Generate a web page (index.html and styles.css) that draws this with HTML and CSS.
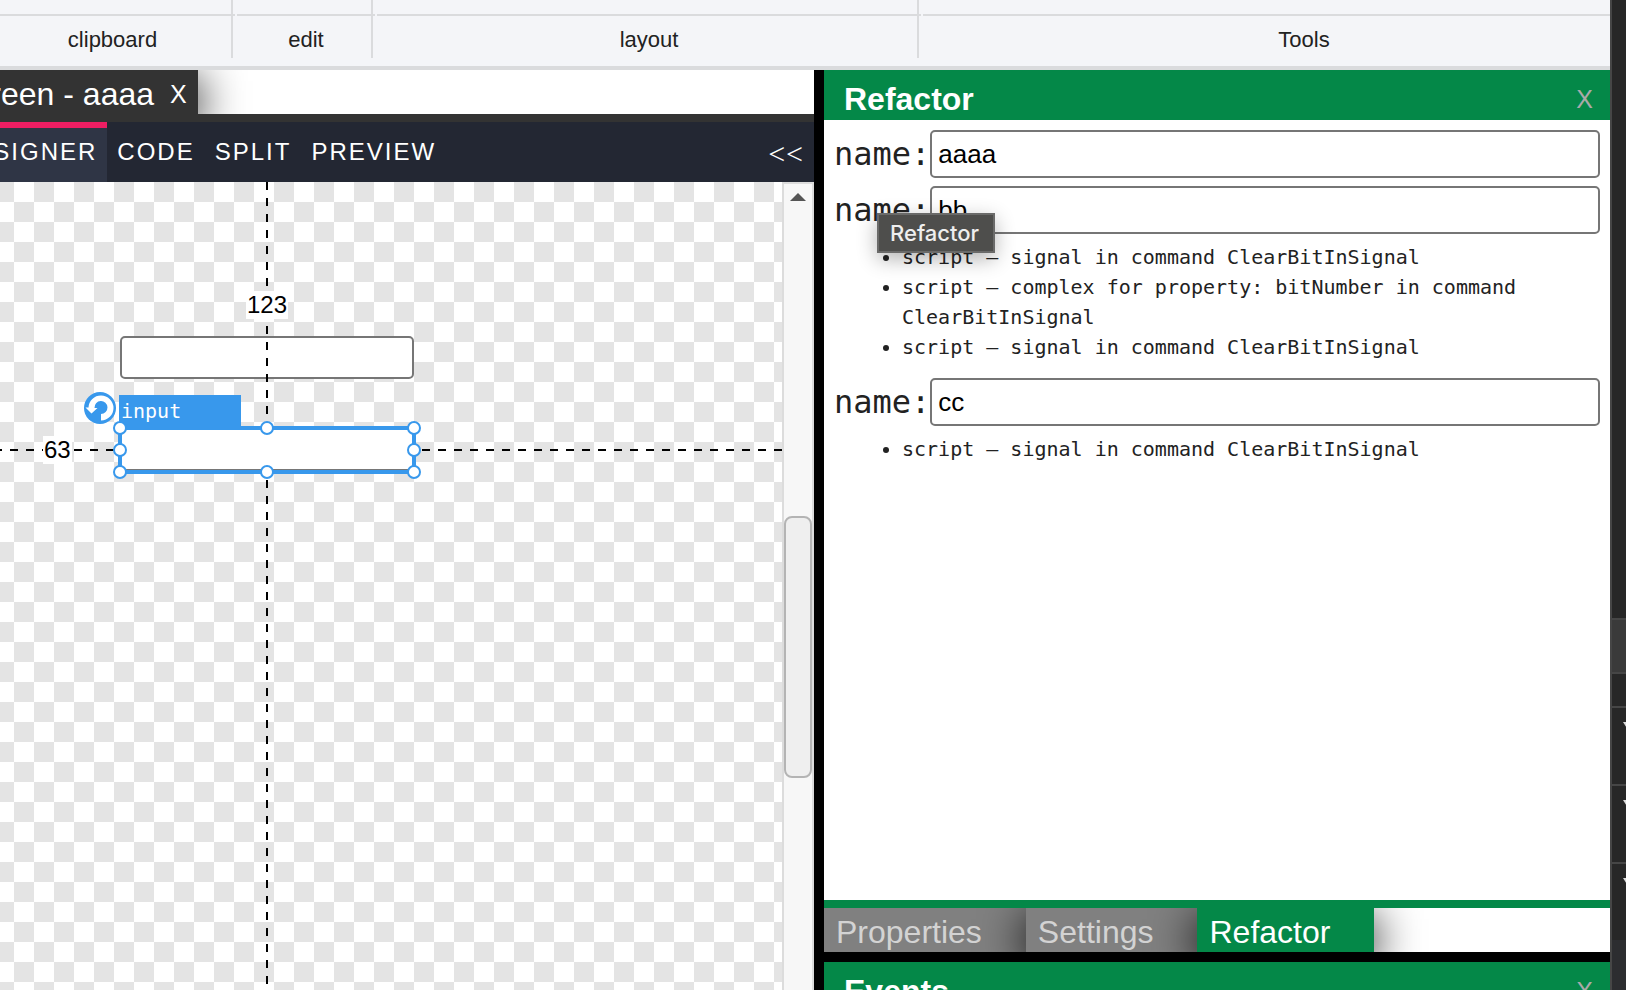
FILE: index.html
```html
<!DOCTYPE html>
<html lang="en">
<head>
<meta charset="utf-8">
<title>Screen designer</title>
<link rel="stylesheet" href="styles.css">
</head>
<body>
<div class="app">
  <header class="ribbon">
    <div class="ribbon-group ribbon-clipboard"><div class="ribbon-tools"></div><div class="ribbon-label">clipboard</div></div>
    <div class="ribbon-group ribbon-edit"><div class="ribbon-tools"></div><div class="ribbon-label">edit</div></div>
    <div class="ribbon-group ribbon-layout"><div class="ribbon-tools"></div><div class="ribbon-label">layout</div></div>
    <div class="ribbon-group ribbon-last"><div class="ribbon-tools"></div><div class="ribbon-label">Tools</div></div>
  </header>
  <div class="workspace">
    <main class="editor">
      <div class="doc-tabs">
        <div class="doc-tab"><span>Screen - aaaa</span><button class="close" aria-label="Close document">X</button></div>
      </div>
      <nav class="modes">
        <button class="mode mode-active">DESIGNER</button>
        <button class="mode">CODE</button>
        <button class="mode">SPLIT</button>
        <button class="mode">PREVIEW</button>
        <button class="collapse" aria-label="Collapse">&lt;&lt;</button>
      </nav>
      <div class="stage">
        <div class="canvas">
          <input class="field" type="text" aria-label="First field">
          <input class="field field-selected" type="text" aria-label="Second field">
          <div class="guide-v guide-top"></div>
          <div class="guide-v guide-bottom"></div>
          <div class="guide-h guide-left"></div>
          <div class="guide-h guide-right"></div>
          <span class="measure measure-y">123</span>
          <span class="measure measure-x">63</span>
          <span class="tag">input</span>
          <svg class="rotate" viewBox="0 0 32 32" width="32" height="32">
            <circle cx="16" cy="16" r="16" fill="#3898ec"/>
            <path d="M17 28.500V22A6.500 6.500 0 1 0 10.500 16H13.500L7.500 21.500 1.500 15.500H4.500A12.500 12.500 0 0 1 17 3.500 12.500 12.500 0 0 1 29.500 16 12.500 12.500 0 0 1 17 28.500Z" fill="#fff"/>
          </svg>
          <svg class="handles" viewBox="0 0 310 60" width="310" height="60">
            <rect x="8" y="8" width="294" height="44" fill="none" stroke="#3898ec" stroke-width="4"/>
            <path d="M10 49.500H300" stroke="#777" stroke-width="1" stroke-dasharray="8 8"/>
            <g fill="#fff" stroke="#3898ec" stroke-width="2">
              <circle cx="8" cy="8" r="6"/><circle cx="155" cy="8" r="6"/><circle cx="302" cy="8" r="6"/>
              <circle cx="8" cy="30" r="6"/><circle cx="302" cy="30" r="6"/>
              <circle cx="8" cy="52" r="6"/><circle cx="155" cy="52" r="6"/><circle cx="302" cy="52" r="6"/>
            </g>
          </svg>
        </div>
        <div class="scrollbar">
          <svg class="scroll-up" viewBox="0 0 16 8" width="16" height="8"><path d="M0 8 8 0l8 8Z" fill="#555"/></svg>
          <div class="thumb"></div>
        </div>
      </div>
    </main>
    <aside class="dock">
      <section class="panel">
        <div class="panel-head"><h2>Refactor</h2><button class="close" aria-label="Close Refactor">X</button></div>
        <div class="panel-body">
          <div class="row"><label for="n1">name:</label><input id="n1" type="text" value="aaaa"></div>
          <div class="row"><label for="n2">name:</label><input id="n2" type="text" value="bb"></div>
          <ul>
            <li>script – signal in command ClearBitInSignal</li>
            <li>script – complex for property: bitNumber in command ClearBitInSignal</li>
            <li>script – signal in command ClearBitInSignal</li>
          </ul>
          <div class="row"><label for="n3">name:</label><input id="n3" type="text" value="cc"></div>
          <ul>
            <li>script – signal in command ClearBitInSignal</li>
          </ul>
          <div class="tooltip" role="tooltip">Refactor</div>
        </div>
        <div class="panel-tabs">
          <button class="tab">Properties</button>
          <button class="tab">Settings</button>
          <button class="tab tab-active">Refactor</button>
        </div>
      </section>
      <section class="panel-next">
        <div class="panel-head"><h2>Events</h2><button class="close" aria-label="Close Events">X</button></div>
      </section>
    </aside>
  </div>
</div>
<div class="inspector">
  <div class="ins-top"></div>
  <div class="ins-bar"></div>
  <div class="ins-gap"></div>
  <div class="ins-item"><svg viewBox="0 0 10 8" width="10" height="8"><path d="M0 0h10L5 8Z" fill="#ddd"/></svg></div>
  <div class="ins-item"><svg viewBox="0 0 10 8" width="10" height="8"><path d="M0 0h10L5 8Z" fill="#ddd"/></svg></div>
  <div class="ins-item"><svg viewBox="0 0 10 8" width="10" height="8"><path d="M0 0h10L5 8Z" fill="#ddd"/></svg></div>
  <div class="ins-foot"></div>
</div>
</body>
</html>
```
FILE: styles.css
```css
* { box-sizing: border-box; }

body {
  margin: 0;
  height: 100vh;
  display: flex;
  overflow: hidden;
  font-family: "Liberation Sans", Arial, sans-serif;
  color: #222;
  background: #fff;
}

button {
  margin: 0;
  padding: 0;
  border: 0;
  background: none;
  font: inherit;
  color: inherit;
}

.app {
  flex: 1;
  min-width: 0;
  display: flex;
  flex-direction: column;
}

/* Ribbon */
.ribbon {
  flex: none;
  display: flex;
  height: 70px;
  overflow: hidden;
  background: #f4f5f8;
  border-bottom: 4px solid #dadbdd;
}
.ribbon-group { position: relative; flex: none; margin-right: 2px; }
.ribbon-group::after {
  content: "";
  position: absolute;
  top: 0;
  right: 2px;
  width: 2px;
  height: 58px;
  background: #dadbdd;
}
.ribbon-tools { height: 16px; border-bottom: 2px solid #dadbdd; }
.ribbon-label { font-size: 22px; line-height: 48px; text-align: center; }
.ribbon-clipboard { width: 245px; margin-left: -10px; }
.ribbon-edit { width: 138px; }
.ribbon-layout { flex: 1; }
.ribbon-last { width: 762px; margin-right: -75px; }

.workspace {
  flex: 1;
  min-height: 0;
  display: grid;
  grid-template-columns: minmax(0, 814fr) minmax(0, 786fr);
  column-gap: 10px;
  background: #000;
}

/* Editor */
.editor { display: flex; flex-direction: column; min-height: 0; background: #fff; }
.doc-tabs {
  flex: none;
  display: flex;
  height: 52px;
  overflow: hidden;
  border-bottom: 8px solid #333;
}
.doc-tab {
  display: flex;
  align-items: center;
  gap: 16px;
  margin-left: -47px;
  padding: 4px 11px 0 0;
  background: #333;
  color: #fff;
  font-size: 32px;
  line-height: 40px;
  box-shadow: 0 10px 46px #000;
}
.close { font-size: 25px; }
.modes {
  flex: none;
  display: flex;
  height: 60px;
  overflow: hidden;
  background: #232733;
  color: #fff;
  font-size: 24px;
}
.mode { flex: none; padding: 0 10px; letter-spacing: 2px; }
.mode-active {
  margin-left: -54px;
  border-top: 6px solid #ee1e63;
  padding-bottom: 6px;
  background: #2f3545;
}
.collapse {
  margin-left: auto;
  padding: 4px 10px 0 0;
  font-family: "Liberation Serif", serif;
  font-size: 30px;
  letter-spacing: 1px;
}
.stage { flex: 1; min-height: 0; display: flex; }
.canvas {
  position: relative;
  flex: 1;
  overflow: hidden;
  background: repeating-conic-gradient(#e4e4e4 0 25%, #fff 0 50%) 14px 0 / 40px 40px;
}
.field {
  position: absolute;
  left: 120px;
  top: 154px;
  width: 294px;
  height: 43px;
  border: 2px solid #767676;
  border-radius: 5px;
  background: #fff;
}
.field-selected { top: 246px; }
.guide-v {
  position: absolute;
  left: 266px;
  width: 2px;
  background: repeating-linear-gradient(to bottom, #000 0 8px, transparent 8px 16px);
}
.guide-top { top: 0; height: 240px; }
.guide-bottom { top: 298px; bottom: 0; }
.guide-h {
  position: absolute;
  top: 267px;
  height: 2px;
  background: repeating-linear-gradient(to right, #000 0 8px, transparent 8px 16px);
}
.guide-left { left: -6px; width: 122px; }
.guide-right { left: 422px; right: 0; }
.measure {
  position: absolute;
  padding: 0 1px;
  background: #fff;
  color: #000;
  font-size: 24px;
  line-height: 28px;
}
.measure-y { left: 246px; top: 109px; }
.measure-x { left: 43px; top: 254px; }
.tag {
  position: absolute;
  left: 119px;
  top: 213px;
  width: 122px;
  padding-left: 2px;
  background: #3898ec;
  color: #fff;
  font-family: "DejaVu Sans Mono", monospace;
  font-size: 20px;
  line-height: 32px;
}
.rotate { position: absolute; left: 84px; top: 210px; }
.handles { position: absolute; left: 112px; top: 238px; }

.scrollbar {
  position: relative;
  flex: none;
  width: 32px;
  border: 2px solid #dcdcdc;
  border-bottom: 0;
  background: #f7f7f7;
}
.scroll-up { position: absolute; left: 6px; top: 9px; }
.thumb {
  position: absolute;
  left: 0;
  top: 332px;
  width: 28px;
  height: 262px;
  border: 2px solid #b4b4b4;
  border-radius: 8px;
  background: #efefef;
}

/* Docked panels */
.dock { display: flex; flex-direction: column; gap: 10px; min-height: 0; }
.panel { flex: 1; min-height: 0; display: flex; flex-direction: column; background: #fff; }
.panel-next { flex: none; height: 28px; overflow: hidden; }
.panel-head {
  flex: none;
  display: flex;
  align-items: center;
  justify-content: space-between;
  height: 50px;
  padding: 8px 17px 0 20px;
  background: #048848;
}
.panel-head h2 { margin: 0; font-size: 32px; line-height: 42px; color: #fff; }
.panel-head .close { color: #aaa; }
.panel-body {
  position: relative;
  flex: 1;
  min-height: 0;
  padding: 10px;
  font-family: "DejaVu Sans Mono", monospace;
  font-size: 20px;
  line-height: 30px;
}
.row { display: flex; margin-bottom: 8px; }
.row label { font-size: 32px; line-height: 48px; }
.row input {
  flex: 1;
  min-width: 0;
  height: 48px;
  padding: 0 6px;
  border: 2px solid #767676;
  border-radius: 5px;
  background: #fff;
  color: #000;
  font-family: "Liberation Sans", Arial, sans-serif;
  font-size: 26px;
}
.panel-body ul { margin: 0 0 16px; padding-left: 68px; }
.tooltip {
  position: absolute;
  left: 53px;
  top: 93px;
  padding: 0 14px 0 11px;
  border: 2px solid #6a6a69;
  background: #4e4e4c;
  color: #eee;
  font-family: Inter, sans-serif;
  font-size: 22px;
  font-weight: 500;
  line-height: 36px;
  box-shadow: 0 6px 20px rgba(0, 0, 0, 0.3);
}
.panel-tabs {
  flex: none;
  display: flex;
  height: 52px;
  overflow: hidden;
  border-top: 8px solid #048848;
}
.tab {
  padding: 4px 44px 0 12px;
  background: #808080;
  color: #d3d3d3;
  font-size: 32px;
  line-height: 40px;
  box-shadow: 0 10px 46px #000;
}
.tab-active { background: #048848; color: #fff; }

/* Inspector edge */
.inspector {
  flex: none;
  width: 16px;
  display: flex;
  flex-direction: column;
  overflow: hidden;
  border-left: 2px solid #464646;
  background: #272727;
}
.ins-top { height: 618px; }
.ins-bar { height: 56px; border: 2px solid #464646; border-width: 2px 0; background: #3a3a3a; }
.ins-gap { height: 32px; }
.ins-item { height: 78px; padding: 14px 0 0 11px; border-top: 2px solid #464646; }
.ins-item svg { display: block; }
.ins-foot { flex: 1; background: #2c2d30; }
```
